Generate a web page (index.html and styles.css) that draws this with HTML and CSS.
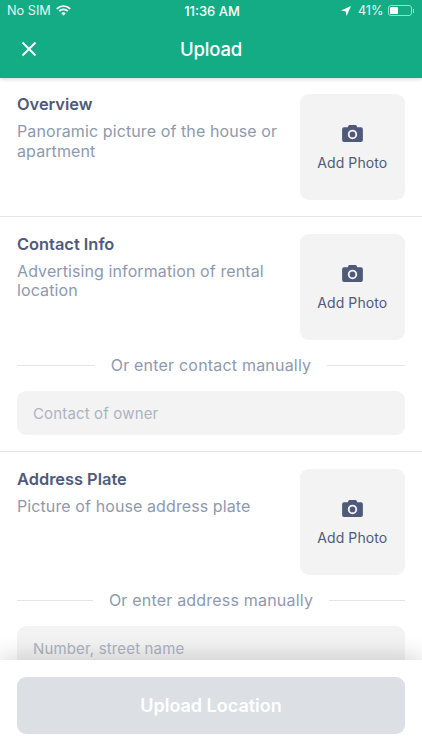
FILE: index.html
```html
<!DOCTYPE html>
<html lang="en">
<head>
<meta charset="utf-8">
<title>Upload</title>
<link rel="stylesheet" href="styles.css">
</head>
<body>
<div class="app">
  <header class="header">
    <div class="status">
      <div class="status-left"><span>No SIM</span>
        <svg class="wifi" viewBox="0 0 16 12"><path d="M8 11.600 5.600 9.100a3.400 3.400 0 0 1 4.800 0zM3.900 7.400a5.800 5.800 0 0 1 8.200 0l1.300-1.300a7.700 7.700 0 0 0-10.800 0zM1.300 4.800a9.400 9.400 0 0 1 13.400 0L16 3.500A11.200 11.200 0 0 0 0 3.500z"/></svg>
      </div>
      <div class="status-time">11:36 AM</div>
      <div class="status-right">
        <svg class="arrow" viewBox="0 0 10 10"><path d="M10 0 0 4.400l4.600.9L5.600 10z"/></svg>
        <span>41%</span>
        <span class="battery"><span class="battery-level"></span></span><span class="battery-cap"></span>
      </div>
    </div>
    <div class="navbar">
      <svg class="close" viewBox="0 0 16 16"><path d="M1.500 1.500l13 13M14.500 1.500l-13 13"/></svg>
      <h1 class="nav-title">Upload</h1>
    </div>
  </header>
  <main class="content">
    <section class="section section-first">
      <div class="row">
        <div class="info">
          <h2 class="info-title">Overview</h2>
          <p class="info-text">Panoramic picture of the house or apartment</p>
        </div>
        <button class="photo">
          <svg class="camera" viewBox="0 0 22 18"><path fill-rule="evenodd" d="M7.200 0h7.600l1.300 2.400h3.900A2 2 0 0 1 22 4.400v11.600a2 2 0 0 1-2 2H2a2 2 0 0 1-2-2V4.400a2 2 0 0 1 2-2h3.900zM11 5a5 5 0 1 0 0 10 5 5 0 0 0 0-10zm0 2a3 3 0 1 1 0 6 3 3 0 0 1 0-6z"/></svg>
          <span>Add Photo</span>
        </button>
      </div>
    </section>
    <section class="section">
      <div class="row">
        <div class="info">
          <h2 class="info-title">Contact Info</h2>
          <p class="info-text">Advertising information of rental location</p>
        </div>
        <button class="photo">
          <svg class="camera" viewBox="0 0 22 18"><path fill-rule="evenodd" d="M7.200 0h7.600l1.300 2.400h3.900A2 2 0 0 1 22 4.400v11.600a2 2 0 0 1-2 2H2a2 2 0 0 1-2-2V4.400a2 2 0 0 1 2-2h3.900zM11 5a5 5 0 1 0 0 10 5 5 0 0 0 0-10zm0 2a3 3 0 1 1 0 6 3 3 0 0 1 0-6z"/></svg>
          <span>Add Photo</span>
        </button>
      </div>
      <div class="or"><span>Or enter contact manually</span></div>
      <div class="input">Contact of owner</div>
    </section>
    <section class="section">
      <div class="row">
        <div class="info">
          <h2 class="info-title">Address Plate</h2>
          <p class="info-text">Picture of house address plate</p>
        </div>
        <button class="photo">
          <svg class="camera" viewBox="0 0 22 18"><path fill-rule="evenodd" d="M7.200 0h7.600l1.300 2.400h3.900A2 2 0 0 1 22 4.400v11.600a2 2 0 0 1-2 2H2a2 2 0 0 1-2-2V4.400a2 2 0 0 1 2-2h3.900zM11 5a5 5 0 1 0 0 10 5 5 0 0 0 0-10zm0 2a3 3 0 1 1 0 6 3 3 0 0 1 0-6z"/></svg>
          <span>Add Photo</span>
        </button>
      </div>
      <div class="or"><span>Or enter address manually</span></div>
      <div class="input">Number, street name</div>
    </section>
  </main>
  <footer class="footer">
    <button class="submit">Upload Location</button>
  </footer>
</div>
</body>
</html>
```
FILE: styles.css
```css
* { box-sizing: border-box; }
html, body { margin: 0; padding: 0; }
body { font-family: Inter, "Liberation Sans", sans-serif; background: #fff; }
.app { width: 422px; height: 750px; display: flex; flex-direction: column; overflow: hidden; }
.header { height: 78px; flex: none; background: #14ac84; color: #fff; box-shadow: 0 1px 4px rgba(0,0,0,.18); position: relative; z-index: 2; }
.status { height: 21px; padding: 0 7px; display: grid; grid-template-columns: 1fr auto 1fr; align-items: center; font-size: 12.700px; color: #e4f6f0; }
.status-left { display: flex; align-items: center; gap: 5px; }
.wifi { width: 15px; height: 11px; fill: #fff; }
.status-time { font-weight: 500; color: #fff; font-size: 13px; padding-left: 2px; }
.status-right { display: flex; align-items: center; justify-content: flex-end; }
.arrow { width: 10px; height: 10px; fill: #fff; margin-right: 7px; }
.battery { width: 24px; height: 11px; margin-left: 4px; border: 1px solid #9fdcc9; border-radius: 3px; padding: 1px; display: flex; }
.battery-level { width: 41%; background: #fff; border-radius: 1px; }
.battery-cap { width: 1.500px; height: 4px; background: #9fdcc9; margin-left: 1px; margin-right: 1px; }
.navbar { height: 56px; position: relative; display: flex; align-items: center; justify-content: center; }
.close { width: 16px; height: 16px; position: absolute; left: 21px; top: 20px; fill: none; stroke: #fff; stroke-width: 2; }
.nav-title { margin: 0; font-size: 18.500px; font-weight: 500; letter-spacing: -.2px; }
.content { flex: 1; min-height: 0; overflow: hidden; }
.section { padding: 17px 17px 16px; border-bottom: 1px solid #e4e5e8; }
.section-first { padding-top: 16px; }
.row { display: flex; justify-content: space-between; }
.info { width: 270px; }
.info-title { margin: 0; font-size: 16.400px; line-height: 20px; font-weight: 600; color: #4f5a7a; }
.info-text { margin: 8px 0 0; font-size: 16px; line-height: 19.500px; letter-spacing: .1px; color: #8f99ad; }
.photo { width: 105.500px; height: 105.750px; flex: none; padding: 0; border: 0; border-radius: 9px; background: #f3f3f4; display: flex; flex-direction: column; align-items: center; font: 14px/18px Inter, "Liberation Sans", sans-serif; letter-spacing: .1px; color: #4f5a7a; }
.camera { width: 21px; height: 17px; margin-top: 31px; margin-bottom: 12px; fill: #4f5a7a; }
.or { margin-top: 15.500px; height: 20px; display: flex; align-items: center; gap: 16px; font-size: 16px; letter-spacing: .2px; color: #8f99ad; white-space: nowrap; }
.or::before, .or::after { content: ""; flex: 1; border-top: 1px solid #e4e5e8; }
.input { margin-top: 16px; height: 44px; padding: 0 16px; border-radius: 9px; background: #f3f3f4; display: flex; align-items: center; font-size: 15px; letter-spacing: .15px; color: #adb2bf; }
.footer { flex: none; height: 90px; padding: 17px 17px 0; background: #fff; box-shadow: 0 -4px 22px rgba(0,0,0,.16); position: relative; }
.submit { display: block; width: 100%; height: 57px; border: 0; border-radius: 9px; background: #dcdfe4; color: #fff; font: 600 18px Inter, "Liberation Sans", sans-serif; }
```
